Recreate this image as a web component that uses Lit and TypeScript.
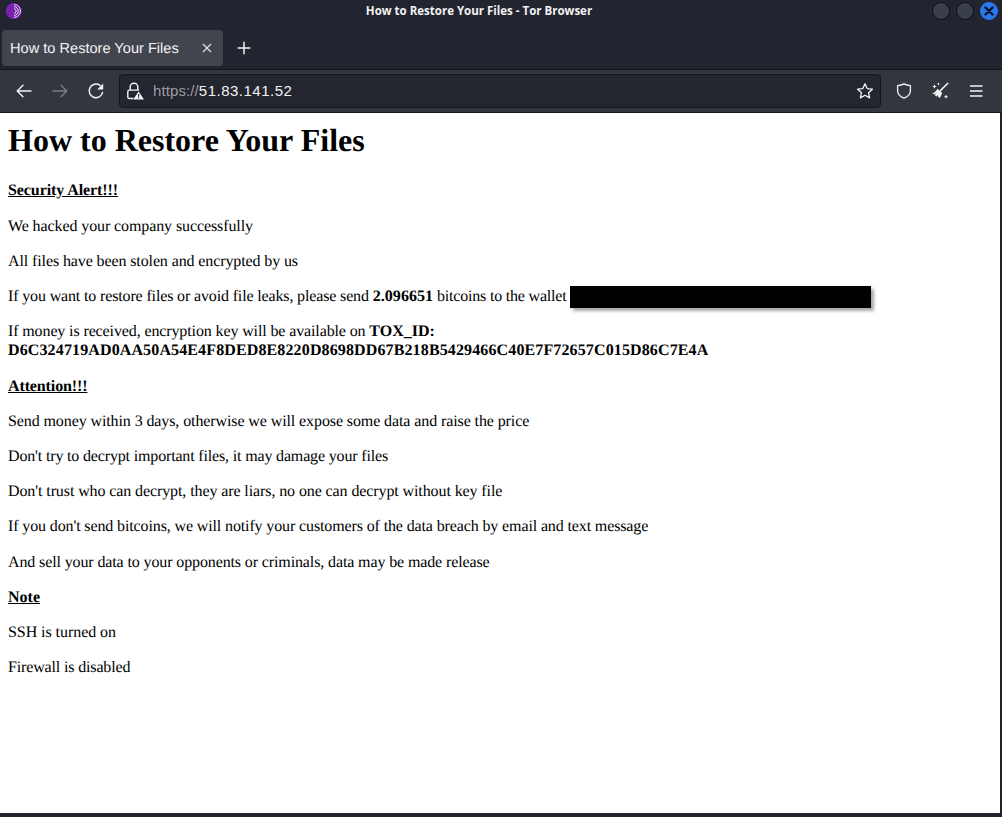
import { LitElement, html, css, svg } from "lit";
import { customElement } from "lit/decorators.js";

const arrow = (d: string) => svg`<path d=${d} fill="none" stroke="currentColor" stroke-width="1.4" stroke-linecap="round" stroke-linejoin="round"/>`;

/* Each line carries the tracking that brings it to the reference's hinted width. */
const tracked = (text: string, spacing: number) =>
  html`<span style="letter-spacing:${spacing}px">${text}</span>`;

@customElement("app-root")
export class AppRoot extends LitElement {
  static styles = css`
    :host { display: block; width: 1002px; height: 817px; overflow: hidden; background: #22252f; }
    .window { display: flex; flex-direction: column; height: 817px; }
    .titlebar { display: flex; align-items: center; height: 22px; background: #22252f; flex: none; }
    .logo { width: 28px; display: flex; justify-content: center; }
    .title { flex: 1; text-align: center; color: #f2f2f2; font: 700 11.5px/22px "Open Sans", sans-serif; }
    .controls { width: 72px; display: flex; gap: 6px; padding-left: 2px; box-sizing: border-box; }
    .dot { width: 18px; height: 18px; border-radius: 50%; background: #3a3f4d; border: 1px solid #0c0e12; box-sizing: border-box; display: flex; align-items: center; justify-content: center; }
    .dot.close { background: #2a77ee; border-color: #2a77ee; }
    .tabbar { display: flex; align-items: center; height: 47px; flex: none; padding-top: 8px; box-sizing: border-box; background: #22252f; }
    .tab { margin-left: 2px; margin-bottom: 3px; width: 221px; height: 36px; background: #42454e; border-radius: 4px; display: flex; align-items: center; box-sizing: border-box; padding: 0 8px; color: #f3f3f4; font: 14.6px "Liberation Sans", sans-serif; text-rendering: geometricPrecision; }
    .tab span { flex: 1; padding-top: 2px; }
    .tab svg { margin-right: 3px; }
    .newtab { margin-left: 13px; margin-bottom: 3px; display: flex; color: #f3f3f4; }
    .toolbar { height: 44px; flex: none; box-sizing: border-box; background: #33363f; border-top: 1px solid #14161c; border-bottom: 1px solid #14161c; display: flex; align-items: center; padding-left: 6px; padding-right: 8px; color: #f3f3f4; }
    .btn { width: 36px; height: 34px; display: flex; align-items: center; justify-content: center; flex: none; }
    .btn.off { color: #7b7d84; }
    .url { flex: 1; margin: 0 5px; height: 34px; box-sizing: border-box; background: #23252f; border: 1px solid #14161c; border-radius: 4px; display: flex; align-items: center; padding: 0 6px; font: 15px "Liberation Sans", sans-serif; letter-spacing: 0.5px; }
    .url .lock { display: flex; margin-right: 9px; }
    .url .addr { flex: 1; color: #f3f3f4; margin-top: -1px; }
    .url .scheme { color: #9b9da3; letter-spacing: 0.1px; }
    .url .star { display: flex; }
    .bottom { flex: 1; display: flex; min-height: 0; padding: 0 2px 4px 0; }
    .page { flex: 1; background: #fff; box-sizing: border-box; padding: 9px 8px 8px; color: #000; font: 16px/19.2px "Liberation Serif", serif; text-rendering: geometricPrecision; }
    h1 { margin: 0 0 22.3px; font: 700 32px/37px "Liberation Serif", serif; }
    p { margin: 0 0 16px; }
    .head { font-weight: 700; text-decoration: underline; }
    .redact { display: inline-block; vertical-align: middle; width: 301px; height: 22px; margin: -2px 0; background: #000; box-shadow: 3px 3px 3px #a8a8a8; }
  `;

  render() {
    return html`<div class="window">
      <div class="titlebar">
        <div class="logo">
          <svg width="16" height="16" viewBox="0 0 16 16">
            <circle cx="8" cy="8" r="8" fill="#6a1b9a"/>
            <path d="M0 8a8 8 0 0 1 8-8v16a8 8 0 0 1-8-8z" fill="#7d1fb0"/>
            <g fill="none" stroke="#f1e6f7" stroke-width="1">
              <path d="M8 1.600a6.400 6.400 0 0 1 0 12.800"/>
              <path d="M8 3.700a4.300 4.300 0 0 1 0 8.600"/>
              <path d="M8 5.800a2.200 2.200 0 0 1 0 4.400"/>
            </g>
          </svg>
        </div>
        <div class="title">How to Restore Your Files - Tor Browser</div>
        <div class="controls">
          <div class="dot"></div>
          <div class="dot"></div>
          <div class="dot close">
            <svg width="10" height="10" viewBox="0 0 10 10"><path d="M1.500 1.500l7 7M8.500 1.500l-7 7" stroke="#0b1220" stroke-width="2.400" stroke-linecap="round"/></svg>
          </div>
        </div>
      </div>
      <div class="tabbar">
        <div class="tab">
          <span>How to Restore Your Files</span>
          <svg width="10" height="10" viewBox="0 0 10 10"><path d="M1 1l8 8M9 1l-8 8" stroke="#e4e4e6" stroke-width="1.100"/></svg>
        </div>
        <div class="newtab">
          <svg width="16" height="16" viewBox="0 0 16 16"><path d="M8 2.200v11.600M2.200 8h11.600" stroke="currentColor" stroke-width="1.500" stroke-linecap="round"/></svg>
        </div>
      </div>
      <div class="toolbar">
        <div class="btn"><svg width="16" height="16" viewBox="0 0 16 16">${arrow("M1.200 8H15M7 2.200 1.200 8 7 13.800")}</svg></div>
        <div class="btn off"><svg width="16" height="16" viewBox="0 0 16 16">${arrow("M14.800 8H1M9 2.200 14.800 8 9 13.800")}</svg></div>
        <div class="btn"><svg width="18" height="18" viewBox="0 0 18 18">
          <path d="M15.600 10.400A6.800 6.800 0 1 1 13 3.400" fill="none" stroke="currentColor" stroke-width="1.500" stroke-linecap="round"/>
          <path d="M16.200 1.600v6h-6z" fill="currentColor"/>
        </svg></div>
        <div class="url">
          <div class="lock"><svg width="18" height="18" viewBox="0 0 18 18">
            <path d="M4.200 8V5a3.800 3.800 0 0 1 7.600 0v3M6.800 16.500H3.400A1.600 1.600 0 0 1 1.800 14.900V9.700a1.600 1.600 0 0 1 1.600-1.600h9.200" fill="none" stroke="currentColor" stroke-width="1.400" stroke-linecap="round"/>
            <path d="M12.600 9.400 18 17.500H7.200z" fill="currentColor"/>
            <path d="M12.600 12v2.800M12.600 15.600v.9" stroke="#23252f" stroke-width="1.200"/>
          </svg></div>
          <div class="addr"><span class="scheme">https://</span>51.83.141.52</div>
          <div class="star"><svg width="18" height="18" viewBox="0 0 18 18"><path d="M9 1.800l2.200 4.800 5.200.6-3.900 3.500 1.100 5.200L9 13.300l-4.600 2.600 1.100-5.200-3.900-3.500 5.200-.6z" fill="none" stroke="currentColor" stroke-width="1.300" stroke-linejoin="round"/></svg></div>
        </div>
        <div class="btn"><svg width="16" height="16" viewBox="0 0 16 16"><path d="M8 .9c2.100 1.200 4.200 1.600 6.400 1.800v5.100c0 3.500-2.700 6-6.400 7.300-3.700-1.300-6.400-3.800-6.400-7.300V2.700C3.800 2.500 5.900 2.100 8 .9z" fill="none" stroke="currentColor" stroke-width="1.300" stroke-linejoin="round"/></svg></div>
        <div class="btn"><svg width="18" height="18" viewBox="0 0 18 18">
          <path d="M16.800 1.200 9.400 8.600" stroke="currentColor" stroke-width="1.500" stroke-linecap="round"/>
          <path d="M6.500 6.800 11.200 11 9 16 7 14.800l.1-2-1.300 1.700-1.900-1.100.8-2.100-1.500 1.200-2-1.300c2.200-.2 3.800-2.100 5.300-4.400z" fill="currentColor"/>
          <path d="M3.500 2.800v3.400M1.800 4.500h3.400M15 13v3.400M13.300 14.700h3.400M7.500 1v1.800M6.600 1.900h1.800" stroke="currentColor" stroke-width="1"/>
        </svg></div>
        <div class="btn"><svg width="16" height="16" viewBox="0 0 16 16"><path d="M2 3h12.500M2 8h12.500M2 13h12.500" stroke="currentColor" stroke-width="1.400"/></svg></div>
      </div>
      <div class="bottom">
        <div class="page">
          <h1>How to Restore Your Files</h1>
          <p class="head">${tracked("Security Alert!!!", -0.09)}</p>
          <p>${tracked("We hacked your company successfully", -0.1)}</p>
          <p>${tracked("All files have been stolen and encrypted by us", -0.11)}</p>
          <p>${tracked("If you want to restore files or avoid file leaks, please send ", -0.145)}<b>${tracked("2.096651", 0.06)}</b>${tracked(" bitcoins to the wallet ", -0.19)}<span class="redact"></span></p>
          <p>${tracked("If money is received, encryption key will be available on ", -0.12)}<b>TOX_ID: ${tracked("D6C324719AD0AA50A54E4F8DED8E8220D8698DD67B218B5429466C40E7F72657C015D86C7E4A", 0.128)}</b></p>
          <p class="head">${tracked("Attention!!!", -0.12)}</p>
          <p>${tracked("Send money within 3 days, otherwise we will expose some data and raise the price", -0.1)}</p>
          <p>${tracked("Don't try to decrypt important files, it may damage your files", -0.16)}</p>
          <p>${tracked("Don't trust who can decrypt, they are liars, no one can decrypt without key file", -0.1)}</p>
          <p>${tracked("If you don't send bitcoins, we will notify your customers of the data breach by email and text message", -0.125)}</p>
          <p>${tracked("And sell your data to your opponents or criminals, data may be made release", -0.12)}</p>
          <p class="head">Note</p>
          <p>${tracked("SSH is turned on", -0.06)}</p>
          <p>${tracked("Firewall is disabled", -0.15)}</p>
        </div>
      </div>
    </div>`;
  }
}
